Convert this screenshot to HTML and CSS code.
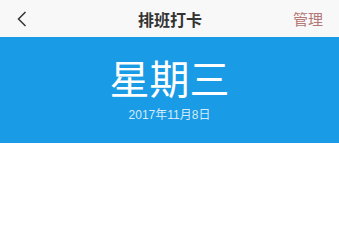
FILE: index.html
```html
<!DOCTYPE html>
<html lang="zh-CN">
<head>
    <meta charset="UTF-8">
    <meta name="viewport" content="width=device-width, initial-scale=1.0">
    <title>排班打卡</title>
    <link rel="stylesheet" href="styles.css">
</head>
<body>
    <header class="top-bar">
        <a class="back-link" href="#">
            <svg width="10" height="16" viewBox="0 0 10 16">
                <polyline points="8.5,1 1.5,8 8.5,15" fill="none" stroke="#333" stroke-width="1.5"/>
            </svg>
        </a>
        <h1 class="top-title">排班打卡</h1>
        <a class="manage-link" href="#">管理</a>
    </header>
    <section class="day-banner">
        <div class="weekday">星期三</div>
        <div class="date">2017年11月8日</div>
    </section>
</body>
</html>
```

FILE: styles.css
```css
* {
    margin: 0;
    padding: 0;
    box-sizing: border-box;
}

body {
    background-color: #fff;
    font-family: "Noto Sans CJK SC", "Noto Sans", sans-serif;
}

.top-bar {
    display: grid;
    grid-template-columns: 1fr auto 1fr;
    align-items: center;
    height: 37px;
    padding: 0 16px 0 17px;
    background-color: #f8f8f8;
}

.back-link {
    display: flex;
    align-items: center;
}

.top-title {
    font-size: 16px;
    font-weight: bold;
    line-height: 20px;
    color: #333;
}

.manage-link {
    justify-self: end;
    font-size: 15px;
    line-height: 20px;
    color: #b47676;
    text-decoration: none;
}

.day-banner {
    height: 106px;
    padding-top: 17px;
    background-color: #1a9be6;
    text-align: center;
}

.weekday {
    font-size: 40px;
    line-height: 46px;
    color: #fff;
}

.date {
    margin-top: 8px;
    font-family: "Liberation Sans", "Noto Sans CJK SC", sans-serif;
    font-size: 12px;
    line-height: 15px;
    color: #d3ebfb;
}
```
